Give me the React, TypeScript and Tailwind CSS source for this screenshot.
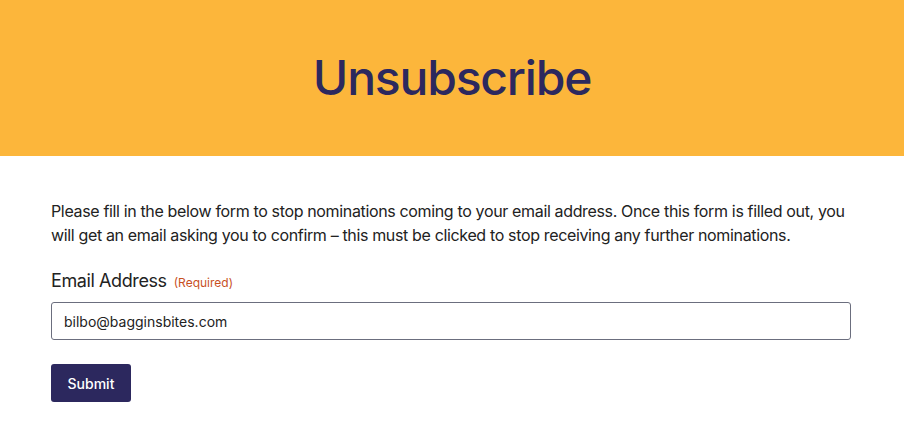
export default function App() {
  return (
    <div className="min-h-screen bg-white font-['Inter','Noto_Sans',sans-serif] text-[#222]">
      <header className="h-[156px] bg-[#fcb63b] flex items-center justify-center">
        <h1 className="text-[48px] font-medium tracking-[-1.2px] text-[#2c285e] leading-none">Unsubscribe</h1>
      </header>
      <main className="w-[800px] ml-[51px] pt-[43px]">
        <p className="text-[16px] leading-6 text-[#222] tracking-[-0.35px]">
          Please fill in the below form to stop nominations coming to your email address. Once this form is filled out, you will get an email asking you to confirm – this must be clicked to stop receiving any further nominations.
        </p>
        <form className="mt-[20px]" onSubmit={(e) => e.preventDefault()}>
          <label className="flex items-baseline gap-[7px]">
            <span className="text-[18px] leading-7 text-[#222] tracking-[-0.4px]">Email Address</span>
            <span className="text-[12px] text-[#c8511f]">(Required)</span>
          </label>
          <input
            type="email"
            defaultValue="bilbo@bagginsbites.com"
            className="mt-[7px] block w-full h-[38px] rounded-[3px] border border-[#6b6e7e] px-3 text-[14px] text-[#222] outline-none"
          />
          <button
            type="submit"
            className="mt-6 h-[38px] w-[80px] rounded-[3px] bg-[#2c285e] text-[14px] font-medium text-white"
          >
            Submit
          </button>
        </form>
      </main>
    </div>
  );
}
